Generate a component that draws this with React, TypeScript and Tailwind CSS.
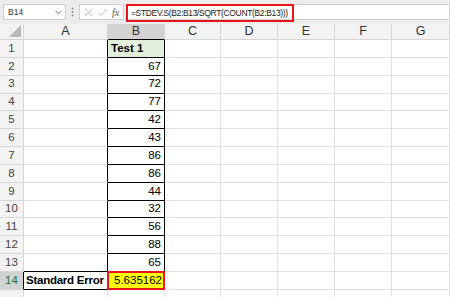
import React from 'react'

const letters = ['A', 'B', 'C', 'D', 'E', 'F', 'G']
const scores = [67, 72, 77, 42, 43, 86, 86, 44, 32, 56, 88, 65]

function cellClass(r: number, c: number) {
  // c: 0 = row header, 1 = A, 2 = B, 3.. = C..G
  if (c === 0) {
    if (r === 14) return 'flex items-center justify-center border-b border-r border-b-[#d5d5d5] border-r-black bg-[#d2d2d2] text-[#217346]'
    return 'flex items-center justify-center border-b border-r border-[#d5d5d5] bg-[#f3f3f3] text-[#444]'
  }
  if (c === 1) {
    if (r === 13 || r === 14) return 'flex items-center border-b border-r border-black px-[2px]'
    if (r <= 12) return 'flex items-center border-b border-r border-b-[#e1e1e1] border-r-black'
    return 'border-b border-r border-[#e1e1e1]'
  }
  if (c === 2) {
    if (r === 1) return 'flex items-center border-b border-r border-black bg-[#e2efda] px-[3px] font-bold'
    if (r === 14) return 'relative flex items-center justify-end border-b border-r border-black bg-[#ffff00] px-[2px]'
    if (r <= 13) return 'flex items-center justify-end border-b border-r border-black px-[3px]'
  }
  return 'border-b border-r border-[#e1e1e1]'
}

function cellText(r: number, c: number) {
  if (c === 0) return r <= 14 ? String(r) : ''
  if (c === 1 && r === 14) return <span className="font-bold tracking-[-0.25px]">Standard Error</span>
  if (c === 2) {
    if (r === 1) return 'Test 1'
    if (r >= 2 && r <= 13) return String(scores[r - 2])
    if (r === 14)
      return (
        <>
          5.635162
          <span className="pointer-events-none absolute -top-px -left-px -right-px -bottom-px border-2 border-[#e8141c]" />
        </>
      )
  }
  return ''
}

function FormulaBar() {
  return (
    <div className="flex h-6 items-start bg-[#ececec] pl-[3px] pt-1">
      <div className="flex h-4 w-[63px] items-center justify-between border border-[#cfcfcf] bg-white pl-[4px] pr-[3px] text-[8.5px] text-[#333]">
        <span>B14</span>
        <svg width="7" height="5" viewBox="0 0 7 5">
          <path d="M0.5 0.8 L3.5 3.8 L6.5 0.8" fill="none" stroke="#777" strokeWidth="1" />
        </svg>
      </div>
      <div className="flex h-4 w-[13px] items-center justify-center">
        <svg width="3" height="10" viewBox="0 0 3 10">
          <circle cx="1.5" cy="1.5" r="0.9" fill="#888" />
          <circle cx="1.5" cy="5" r="0.9" fill="#888" />
          <circle cx="1.5" cy="8.5" r="0.9" fill="#888" />
        </svg>
      </div>
      <div className="flex h-4 w-[45px] items-center gap-[4px] border border-[#cfcfcf] bg-white pl-[4px]">
        <svg width="9" height="9" viewBox="0 0 9 9">
          <path d="M1 1 L8 8 M8 1 L1 8" stroke="#c3c3c3" strokeWidth="1" />
        </svg>
        <svg width="11" height="9" viewBox="0 0 11 9">
          <path d="M1 4.5 L4 7.5 L10 1" fill="none" stroke="#c3c3c3" strokeWidth="1" />
        </svg>
        <span className="font-['Liberation_Serif',serif] text-[10px] italic text-[#555]">fx</span>
      </div>
      <div className="ml-[2px] flex h-4 flex-1 border border-[#cfcfcf] bg-white">
        <div className="-my-px -ml-px flex h-[18px] w-[168px] items-center border-2 border-[#e8141c] pl-[3px] text-[8.5px] tracking-[-0.35px] text-[#222]">
          =STDEV.S(B2:B13/SQRT(COUNT(B2:B13)))
        </div>
      </div>
    </div>
  )
}

export default function App() {
  const rows = Array.from({ length: 15 }, (_, i) => i + 1)
  return (
    <div className="h-[297px] w-[450px] overflow-hidden bg-white font-['Liberation_Sans',Arial,sans-serif] text-[11.5px] text-black">
      <FormulaBar />
      <div className="grid grid-cols-[24px_84px_57px_56px_57px_57px_57px_58px] grid-rows-[16px_repeat(15,17.85px)] bg-white">
        <div className="relative border-b border-r border-[#d5d5d5] bg-[#f3f3f3]">
          <svg className="absolute bottom-[2px] right-[2px]" width="12" height="12" viewBox="0 0 12 12">
            <polygon points="12,0 12,12 0,12" fill="#b7b7b7" />
          </svg>
        </div>
        {letters.map((l) =>
          l === 'B' ? (
            <div key={l} className="flex items-center justify-center border-b border-r border-b-black border-r-[#d5d5d5] bg-[#d3d3d3] text-[12.5px] text-[#333]">
              {l}
            </div>
          ) : (
            <div key={l} className="flex items-center justify-center border-b border-r border-[#d5d5d5] bg-[#f3f3f3] text-[12.5px] text-[#333]">
              {l}
            </div>
          )
        )}
        {rows.map((r) =>
          [0, 1, 2, 3, 4, 5, 6, 7].map((c) => (
            <div key={`${r}-${c}`} className={cellClass(r, c) + (c === 0 ? ' text-[11.5px]' : '')}>
              {cellText(r, c)}
            </div>
          ))
        )}
      </div>
    </div>
  )
}
